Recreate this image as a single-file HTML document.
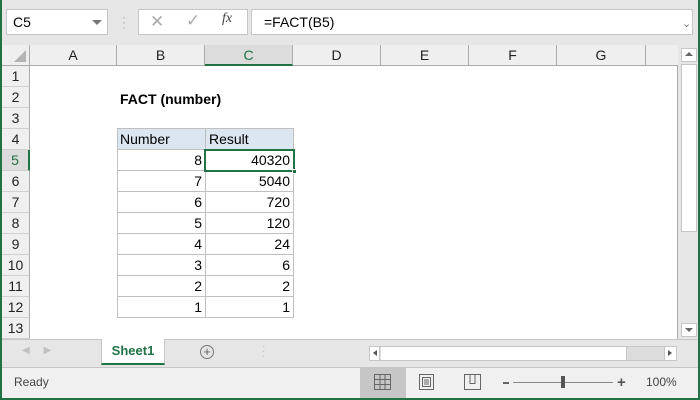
<!DOCTYPE html>
<html><head><style>
*{margin:0;padding:0;box-sizing:border-box}
body{width:700px;height:400px;position:relative;overflow:hidden;background:#e6e6e6;font-family:"Liberation Sans",Calibri,sans-serif;color:#000}
.a{position:absolute}
.box{background:#fff;border:1px solid #c6c6c6}
.ch{position:absolute;top:45px;height:20px;border-right:1px solid #ababab;text-align:center;font-size:14px;line-height:21px;color:#222}
.rh{position:absolute;left:2px;width:28px;height:21px;border-bottom:1px solid #d0d0d0;border-right:1px solid #ababab;text-align:center;font-size:14px;line-height:21px;color:#222}
.c{position:absolute;height:21px;border-right:1px solid #bfbfbf;border-bottom:1px solid #bfbfbf;font-size:14px;line-height:21px;text-align:right;padding-right:3px}
</style></head><body>
<div class="a" style="left:0;top:0;width:2px;height:400px;background:#217346"></div>
<div class="a" style="right:0;top:0;width:2px;height:400px;background:#217346"></div>
<div class="a" style="left:0;bottom:0;width:700px;height:2px;background:#217346"></div>
<!-- formula bar -->
<div class="a box" style="left:6px;top:9px;width:102px;height:26px;font-size:14px;line-height:24px;padding-left:6px">C5</div>
<div class="a" style="left:92px;top:20px;width:0;height:0;border-left:5px solid transparent;border-right:5px solid transparent;border-top:5px solid #777"></div>
<div class="a" style="left:122px;top:15px;color:#aaa;font-size:12px;line-height:5px">·<br>·<br>·</div>
<div class="a box" style="left:138px;top:9px;width:110px;height:26px"></div>
<div class="a" style="left:150px;top:12px;color:#aaa;font-size:17px">✕</div>
<div class="a" style="left:186px;top:11px;color:#aaa;font-size:17px">✓</div>
<div class="a" style="left:222px;top:11px;color:#444;font-size:14px;font-style:italic;font-family:'Liberation Serif',serif">fx</div>
<div class="a box" style="left:251px;top:9px;width:442px;height:26px;font-size:14px;line-height:24px;padding-left:12px">=FACT(B5)</div>
<div class="a" style="left:682px;top:17px;color:#777;font-size:11px">⌄</div>
<!-- headers -->
<div class="a" style="left:2px;top:45px;width:676px;height:21px;background:#efefef;border-bottom:1px solid #ababab"></div>
<div class="a" style="left:2px;top:45px;width:28px;height:20px;border-right:1px solid #ababab"></div>
<div class="a" style="left:14px;top:50px;width:0;height:0;border-left:12px solid transparent;border-bottom:12px solid #b4b4b4"></div>
<div class="ch" style="left:30px;width:87px">A</div>
<div class="ch" style="left:117px;width:88px">B</div>
<div class="ch" style="left:205px;width:88px;background:#dcdcdc;border-bottom:2px solid #217346;color:#217346;height:21px">C</div>
<div class="ch" style="left:293px;width:88px">D</div>
<div class="ch" style="left:381px;width:88px">E</div>
<div class="ch" style="left:469px;width:88px">F</div>
<div class="ch" style="left:557px;width:89px">G</div>
<!-- grid -->
<div class="a" style="left:30px;top:66px;width:648px;height:273px;background:#fff;border-right:1px solid #ababab"></div>
<div class="a" style="left:2px;top:66px;width:28px;height:273px;background:#efefef"></div>
<div class="rh" style="top:66px">1</div>
<div class="rh" style="top:87px">2</div>
<div class="rh" style="top:108px">3</div>
<div class="rh" style="top:129px">4</div>
<div class="rh" style="top:150px;background:#dcdcdc;color:#217346;border-right:2px solid #217346">5</div>
<div class="rh" style="top:171px">6</div>
<div class="rh" style="top:192px">7</div>
<div class="rh" style="top:213px">8</div>
<div class="rh" style="top:234px">9</div>
<div class="rh" style="top:255px">10</div>
<div class="rh" style="top:276px">11</div>
<div class="rh" style="top:297px">12</div>
<div class="rh" style="top:318px">13</div>
<div class="a" style="left:120px;top:89px;font-size:14px;font-weight:bold;line-height:21px">FACT (number)</div>
<!-- table -->
<div class="a" style="left:117px;top:128px;width:177px;height:190px;border-left:1px solid #bfbfbf;border-top:1px solid #bfbfbf"></div>
<div class="c" style="left:118px;top:129px;width:88px;background:#dce6f1;text-align:left;padding-left:2px">Number</div>
<div class="c" style="left:206px;top:129px;width:88px;background:#dce6f1;text-align:left;padding-left:3px">Result</div>
<div class="c" style="left:118px;top:150px;width:88px">8</div><div class="c" style="left:206px;top:150px;width:88px">40320</div>
<div class="c" style="left:118px;top:171px;width:88px">7</div><div class="c" style="left:206px;top:171px;width:88px">5040</div>
<div class="c" style="left:118px;top:192px;width:88px">6</div><div class="c" style="left:206px;top:192px;width:88px">720</div>
<div class="c" style="left:118px;top:213px;width:88px">5</div><div class="c" style="left:206px;top:213px;width:88px">120</div>
<div class="c" style="left:118px;top:234px;width:88px">4</div><div class="c" style="left:206px;top:234px;width:88px">24</div>
<div class="c" style="left:118px;top:255px;width:88px">3</div><div class="c" style="left:206px;top:255px;width:88px">6</div>
<div class="c" style="left:118px;top:276px;width:88px">2</div><div class="c" style="left:206px;top:276px;width:88px">2</div>
<div class="c" style="left:118px;top:297px;width:88px">1</div><div class="c" style="left:206px;top:297px;width:88px">1</div>
<div class="a" style="left:204px;top:149px;width:91px;height:23px;border:2px solid #217346"></div>
<div class="a" style="left:292px;top:169px;width:5px;height:5px;background:#217346;border:1px solid #fff"></div>
<!-- v scrollbar -->
<div class="a" style="left:680px;top:45px;width:18px;height:294px;background:#e6e6e6"></div>
<div class="a" style="left:681px;top:48px;width:16px;height:14px;background:#fff;border:1px solid #c6c6c6"></div>
<div class="a" style="left:685px;top:52px;border-left:4px solid transparent;border-right:4px solid transparent;border-bottom:4px solid #666"></div>
<div class="a" style="left:681px;top:64px;width:16px;height:168px;background:#fff;border:1px solid #c6c6c6"></div>
<div class="a" style="left:681px;top:323px;width:16px;height:14px;background:#fff;border:1px solid #c6c6c6"></div>
<div class="a" style="left:685px;top:328px;border-left:4px solid transparent;border-right:4px solid transparent;border-top:4px solid #666"></div>
<!-- tabs -->
<div class="a" style="left:2px;top:339px;width:696px;height:28px;background:#e6e6e6;border-top:1px solid #c6c6c6"></div>
<div class="a" style="left:22px;top:345px;color:#c0c0c0;font-size:10px">◀&nbsp;&nbsp;&nbsp;&nbsp;&nbsp;▶</div>
<div class="a" style="left:101px;top:339px;width:64px;height:26px;background:#fff;border-left:1px solid #c6c6c6;border-right:1px solid #c6c6c6;border-bottom:2px solid #217346;text-align:center;font-size:13px;font-weight:bold;color:#217346;line-height:24px">Sheet1</div>
<div class="a" style="left:200px;top:345px;width:14px;height:14px;border:1px solid #777;border-radius:50%;text-align:center;font-size:13px;line-height:12px;color:#666">+</div>
<div class="a" style="left:262px;top:344px;color:#bbb;font-size:10px;line-height:5px">·<br>·<br>·</div>
<div class="a" style="left:369px;top:346px;width:308px;height:15px;background:#dcdcdc;border:1px solid #c6c6c6"></div>
<div class="a" style="left:370px;top:347px;width:10px;height:13px;background:#fff;border-right:1px solid #c6c6c6"></div>
<div class="a" style="left:373px;top:350px;border-top:3px solid transparent;border-bottom:3px solid transparent;border-right:4px solid #555"></div>
<div class="a" style="left:381px;top:347px;width:246px;height:13px;background:#fff;border-right:1px solid #c6c6c6"></div>
<div class="a" style="left:664px;top:347px;width:12px;height:13px;background:#fff;border-left:1px solid #c6c6c6"></div>
<div class="a" style="left:668px;top:350px;border-top:3px solid transparent;border-bottom:3px solid transparent;border-left:4px solid #555"></div>
<!-- status -->
<div class="a" style="left:2px;top:367px;width:696px;height:31px;background:#f0f0f0;border-top:1px solid #c6c6c6"></div>
<div class="a" style="left:14px;top:375px;font-size:12px;color:#444">Ready</div>
<div class="a" style="left:360px;top:368px;width:46px;height:30px;background:#c6c6c6"></div>
<svg class="a" style="left:374px;top:374px" width="18" height="17"><g fill="none" stroke="#666"><rect x=".5" y=".5" width="16" height="15"/><path d="M6 .5V16M11 .5V16M.5 5.5H17M.5 10.5H17"/></g></svg>
<svg class="a" style="left:419px;top:374px" width="16" height="17"><g fill="none" stroke="#666"><rect x=".5" y=".5" width="14" height="15"/><rect x="3.5" y="3.5" width="8" height="9"/><path d="M5 6h5M5 8h5M5 10h5"/></g></svg>
<svg class="a" style="left:464px;top:374px" width="18" height="17"><g fill="none" stroke="#666"><rect x=".5" y=".5" width="16" height="15"/><path d="M6 .5V9.5H11V.5"/></g></svg>
<div class="a" style="left:503px;top:382px;width:6px;height:2px;background:#666"></div>
<div class="a" style="left:513px;top:382px;width:100px;height:1px;background:#888"></div>
<div class="a" style="left:561px;top:376px;width:4px;height:12px;background:#555"></div>
<div class="a" style="left:617px;top:376px;font-size:15px;color:#555;line-height:13px;font-weight:bold">+</div>
<div class="a" style="left:646px;top:375px;font-size:12px;color:#444">100%</div>
</body></html>
